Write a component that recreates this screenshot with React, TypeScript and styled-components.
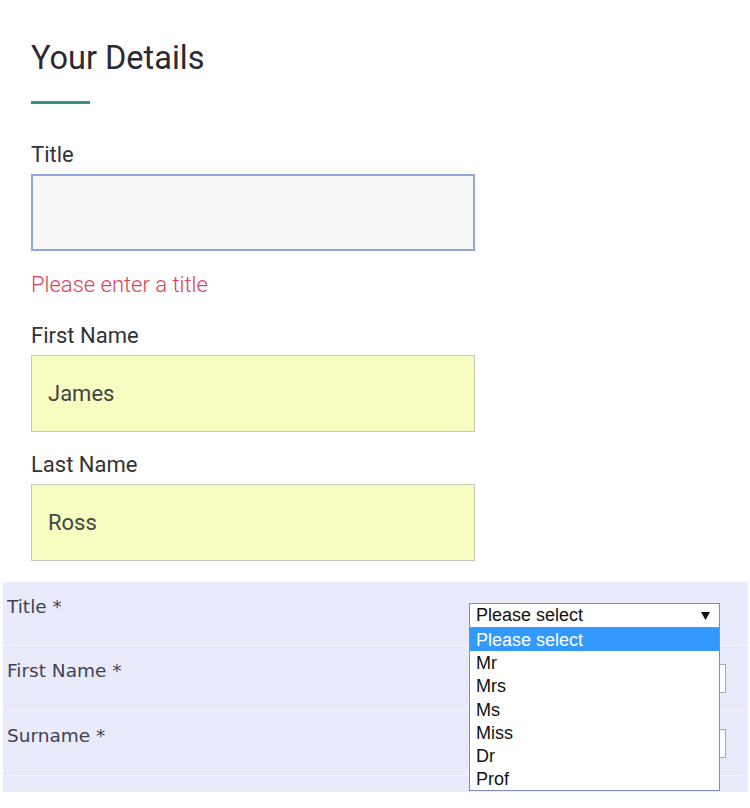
import styled, { createGlobalStyle } from "styled-components";

const GlobalStyle = createGlobalStyle`
  body {
    margin: 0;
    background: #ffffff;
    font-family: Roboto, "Liberation Sans", sans-serif;
  }
`;

const Page = styled.div`
  width: 750px;
  min-height: 808px;
  display: flex;
  flex-direction: column;
`;

// Upper "Your Details" form
const Details = styled.section`
  display: flex;
  flex-direction: column;
  padding: 39px 0 0 31px;
`;

const Heading = styled.h1`
  margin: 0;
  font-family: Roboto, sans-serif;
  font-weight: 400;
  font-size: 32.5px;
  line-height: 38px;
  color: #2b2a33;
`;

const Accent = styled.div`
  width: 59px;
  height: 3px;
  margin-top: 24px;
  background: #3a8f8c;
`;

const Label = styled.label<{ $gap: number }>`
  display: block;
  margin-top: ${(p) => p.$gap}px;
  font-size: 22px;
  line-height: 26px;
  color: #333333;
`;

const TextBox = styled.input<{ $focused?: boolean }>`
  box-sizing: border-box;
  width: 444px;
  height: 77px;
  margin-top: 6px;
  padding: 0 16px;
  font-family: Roboto, sans-serif;
  font-size: 22px;
  color: #444444;
  outline: none;
  border: ${(p) => (p.$focused ? "2px solid #8fa6da" : "1px solid #c6c7b4")};
  background: ${(p) => (p.$focused ? "#f7f7f7" : "#f9fcc0")};
`;

const ErrorText = styled.div`
  margin-top: 21px;
  font-size: 22px;
  font-weight: 300;
  line-height: 26px;
  color: #e0405a;
`;

// Lower legacy form panel
const Panel = styled.section`
  margin: 21px 2px 0 3px;
  background: #e9ebfb;
  display: flex;
  flex-direction: column;
`;

const PanelRow = styled.div<{ $height: number }>`
  box-sizing: border-box;
  height: ${(p) => p.$height}px;
  display: grid;
  grid-template-columns: 462px auto;
  align-items: start;
  padding: 14px 0 0 4px;
  border-bottom: 1px solid #f4f5fd;

  &:last-child {
    border-bottom: none;
    padding: 0;
  }
`;

const RowLabel = styled.span`
  font-family: "DejaVu Sans", Verdana, sans-serif;
  font-size: 18.5px;
  line-height: 22px;
  color: #404352;
`;

const SelectWrap = styled.div`
  position: relative;
  width: 251px;
  margin-top: 7px;
`;

const SelectBox = styled.div`
  box-sizing: border-box;
  height: 25px;
  display: flex;
  align-items: center;
  justify-content: space-between;
  padding: 0 9px 0 6px;
  background: #ffffff;
  border: 1px solid #7d8fb8;
  font-family: "Liberation Sans", Arial, sans-serif;
  font-size: 18px;
  color: #111111;
`;

const Dropdown = styled.ul`
  position: absolute;
  top: 100%;
  left: 0;
  z-index: 2;
  box-sizing: border-box;
  width: 251px;
  margin: 0;
  padding: 0;
  list-style: none;
  background: #ffffff;
  border: 1px solid #7d8fb8;
  border-top: none;
`;

const Option = styled.li<{ $active?: boolean }>`
  height: 23.2px;
  padding: 1px 0 0 6px;
  box-sizing: border-box;
  font-family: "Liberation Sans", Arial, sans-serif;
  font-size: 18px;
  line-height: 22px;
  color: ${(p) => (p.$active ? "#ffffff" : "#111111")};
  background: ${(p) => (p.$active ? "#3399ff" : "transparent")};
`;

const PanelInput = styled.input`
  box-sizing: border-box;
  width: 257px;
  height: 29px;
  margin-top: 4px;
  border: 1px solid #a8a8b0;
  background: #ffffff;
  outline: none;
`;

const titles = ["Please select", "Mr", "Mrs", "Ms", "Miss", "Dr", "Prof"];

function App() {
  return (
    <Page>
      <GlobalStyle />
      <Details>
        <Heading>Your Details</Heading>
        <Accent />

        <Label $gap={38}>Title</Label>
        <TextBox $focused readOnly />
        <ErrorText>Please enter a title</ErrorText>

        <Label $gap={25}>First Name</Label>
        <TextBox readOnly defaultValue="James" />

        <Label $gap={20}>Last Name</Label>
        <TextBox readOnly defaultValue="Ross" />
      </Details>

      <Panel>
        <PanelRow $height={64}>
          <RowLabel>Title *</RowLabel>
          <SelectWrap>
            <SelectBox>
              <span>Please select</span>
              <svg width="9" height="8" viewBox="0 0 9 8">
                <polygon points="0,0 9,0 4.5,8" fill="#111" />
              </svg>
            </SelectBox>
            <Dropdown>
              {titles.map((t, i) => (
                <Option key={t} $active={i === 0}>
                  {t}
                </Option>
              ))}
            </Dropdown>
          </SelectWrap>
        </PanelRow>
        <PanelRow $height={65}>
          <RowLabel>First Name *</RowLabel>
          <PanelInput readOnly />
        </PanelRow>
        <PanelRow $height={65}>
          <RowLabel>Surname *</RowLabel>
          <PanelInput readOnly />
        </PanelRow>
        <PanelRow $height={16} />
      </Panel>
    </Page>
  );
}

export default App;
